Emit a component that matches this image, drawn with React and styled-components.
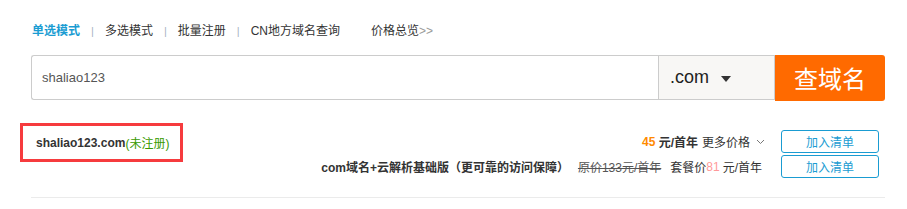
import styled, { createGlobalStyle } from "styled-components";

const GlobalStyle = createGlobalStyle`
  body {
    margin: 0;
    background: #fff;
    font-family: "Liberation Sans", "Noto Sans CJK SC", Arial, sans-serif;
    color: #333;
  }
`;

const Page = styled.div`
  width: 854px;
  padding: 21px 22px 0 31px;
`;

const Tabs = styled.nav`
  display: flex;
  align-items: center;
  height: 20px;
  font-size: 12px;
  line-height: 20px;
  padding-left: 1px;
`;

const Tab = styled.span`
  color: ${(p) => (p.$active ? "#1a9cd2" : "#333")};
  font-weight: ${(p) => (p.$active ? "bold" : "normal")};
`;

const Sep = styled.span`
  color: #a8b4c4;
  margin: 0 11px 0 11px;
  font-size: 11px;
`;

const PriceLink = styled.span`
  margin-left: 31px;
  color: #333;

  em {
    font-style: normal;
    color: #999;
  }
`;

const SearchBar = styled.div`
  display: flex;
  height: 45px;
  margin-top: 14px;
`;

const SearchInput = styled.div`
  flex: 1;
  display: flex;
  align-items: center;
  padding-left: 10px;
  border: 1px solid #ccc;
  border-right: none;
  border-radius: 3px 0 0 3px;
  font-size: 13px;
  color: #555;
`;

const Suffix = styled.div`
  width: 104px;
  display: flex;
  align-items: center;
  gap: 12px;
  padding-left: 11px;
  background: #f8f7f5;
  border: 1px solid #ccc;
  font-size: 18px;
  color: #222;
`;

const Caret = styled.span`
  width: 0;
  height: 0;
  border-left: 5px solid transparent;
  border-right: 5px solid transparent;
  border-top: 6px solid #333;
  margin-top: 2px;
`;

const SearchButton = styled.button`
  width: 110px;
  height: 46px;
  border: none;
  border-radius: 0 3px 3px 0;
  background: #ff6a00;
  color: #fff;
  font-family: "Noto Sans CJK SC", sans-serif;
  font-size: 24px;
  padding: 0 0 2px;
  cursor: pointer;
`;

const Result = styled.div`
  display: flex;
  justify-content: space-between;
  align-items: flex-start;
  margin-top: 23px;
  padding-bottom: 19px;
  border-bottom: 1px solid #ebebeb;
`;

const DomainBox = styled.div`
  margin-left: -11px;
  width: 144px;
  height: 33px;
  padding-left: 13px;
  border: 3px solid #f63b3e;
  display: flex;
  align-items: center;
  font-size: 12px;
  font-weight: bold;
  color: #333;

  span {
    font-weight: normal;
    color: #3a9a00;
  }
`;

const Offers = styled.div`
  display: flex;
  flex-direction: column;
  gap: 2px;
  margin-top: 7px;
  margin-right: 6px;
`;

const OfferRow = styled.div`
  display: flex;
  align-items: center;
  justify-content: flex-end;
  gap: ${(p) => p.$gap || 16}px;
  font-size: 12px;
  color: #333;
`;

const OfferText = styled.div`
  display: flex;
  align-items: center;
  white-space: pre;
`;

const Price = styled.b`
  color: ${(p) => p.$color};
  font-weight: ${(p) => (p.$bold ? "bold" : "normal")};
`;

const Strong = styled.b`
  font-weight: bold;
`;

const Part = styled.span`
  margin-left: ${(p) => p.$gap || 0}px;
`;

const Struck = styled.span`
  margin-left: 9px;
  color: #555;
  text-decoration: line-through;
`;

const AddButton = styled.button`
  width: 98px;
  height: 23px;
  border: 1px solid #1a9cd2;
  border-radius: 3px;
  background: #fff;
  color: #1a9cd2;
  font-family: "Noto Sans CJK SC", sans-serif;
  font-size: 12px;
  padding: 0;
  cursor: pointer;
`;

const Chevron = () => (
  <svg width="9" height="6" viewBox="0 0 9 6" style={{ marginLeft: 6 }}>
    <path d="M1 1l3.5 3.5L8 1" fill="none" stroke="#777" strokeWidth="1" />
  </svg>
);

export default function App() {
  return (
    <>
      <GlobalStyle />
      <Page>
        <Tabs>
          <Tab $active>单选模式</Tab>
          <Sep>|</Sep>
          <Tab>多选模式</Tab>
          <Sep>|</Sep>
          <Tab>批量注册</Tab>
          <Sep>|</Sep>
          <Tab>CN地方域名查询</Tab>
          <PriceLink>
            价格总览<em>&gt;&gt;</em>
          </PriceLink>
        </Tabs>

        <SearchBar>
          <SearchInput>shaliao123</SearchInput>
          <Suffix>
            .com
            <Caret />
          </Suffix>
          <SearchButton>查域名</SearchButton>
        </SearchBar>

        <Result>
          <DomainBox>
            shaliao123.com<span>(未注册)</span>
          </DomainBox>
          <Offers>
            <OfferRow>
              <OfferText>
                <Price $color="#ff8a00" $bold>45</Price>
                <Strong>&nbsp;元/首年</Strong>
                <Part $gap={4}>更多价格</Part>
                <Chevron />
              </OfferText>
              <AddButton>加入清单</AddButton>
            </OfferRow>
            <OfferRow $gap={19}>
              <OfferText>
                <Strong>com域名+云解析基础版（更可靠的访问保障）</Strong>
                <Struck>原价133元/首年</Struck>
                <Part $gap={9}>套餐价</Part>
                <Price $color="#f99">81</Price>
                <Part $gap={3}>元/首年</Part>
              </OfferText>
              <AddButton>加入清单</AddButton>
            </OfferRow>
          </Offers>
        </Result>
      </Page>
    </>
  );
}
